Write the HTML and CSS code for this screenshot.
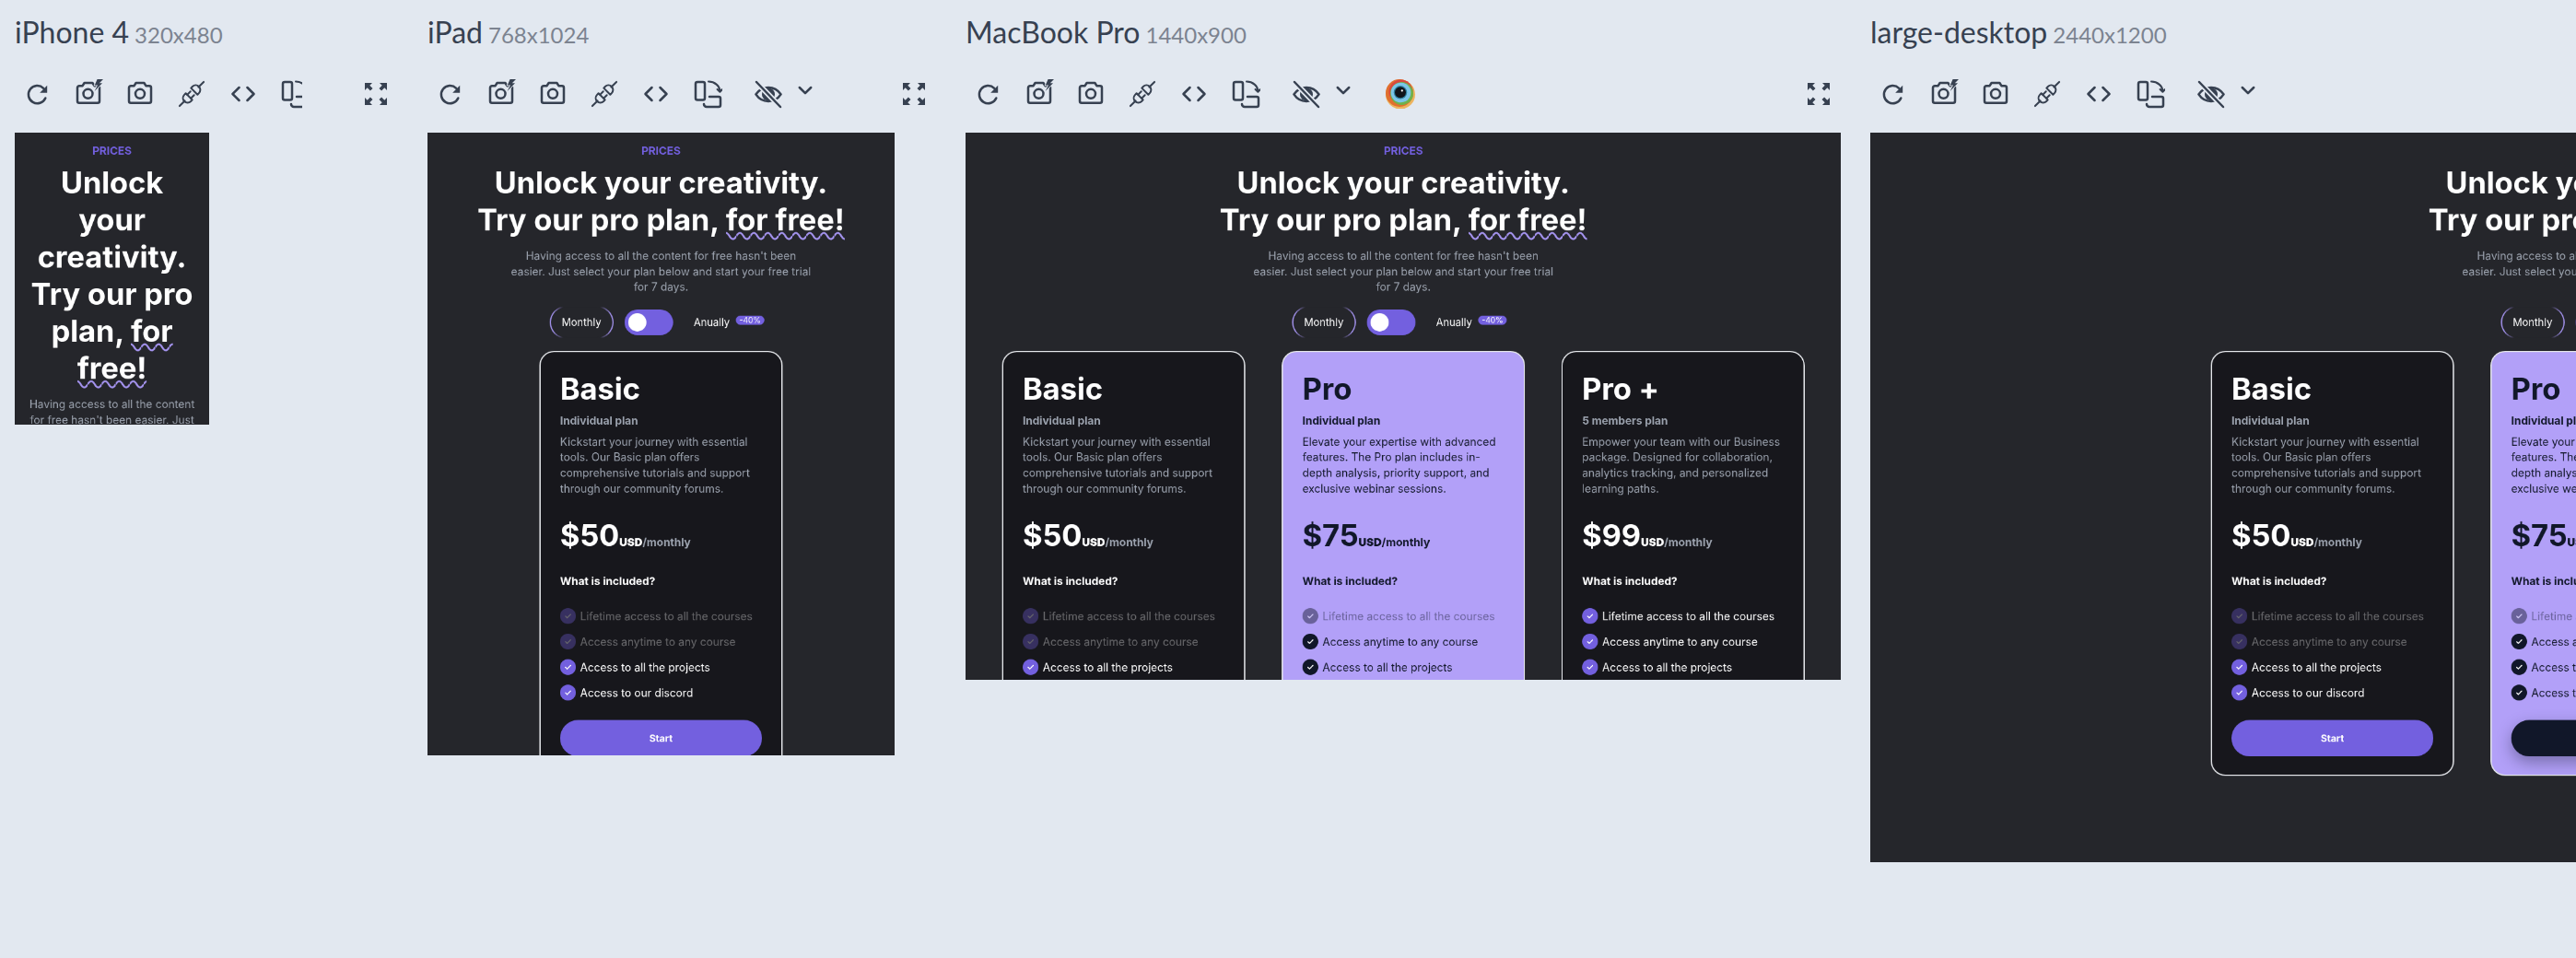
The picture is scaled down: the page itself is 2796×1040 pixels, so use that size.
FILE: index.html
```html
<!DOCTYPE html>
<html lang="en">
<head>
  <meta charset="UTF-8" />
  <meta name="viewport" content="width=device-width, initial-scale=1.0" />
  <title>Device preview</title>
  <link rel="stylesheet" href="styles.css">
</head>
<body>
  <!-- Icon sprite -->
  <svg class="sprite" xmlns="http://www.w3.org/2000/svg">
    <symbol id="i-reload" viewBox="0 0 32 32">
      <path class="ln" d="M25.3 20.5A9.6 9.6 0 1 1 23.2 9.8"/>
      <path class="fl" d="M27.2 6.8V14.8H19.2Z"/>
    </symbol>
    <symbol id="i-flash" viewBox="0 0 32 32">
      <path class="ln" d="M6 7.2H9.6L11.6 4H20.4L22.4 7.2H26A2 2 0 0 1 28 9.2V23.8A2 2 0 0 1 26 25.8H6A2 2 0 0 1 4 23.8V9.2A2 2 0 0 1 6 7.2Z"/>
      <circle class="ln" cx="15.5" cy="15.8" r="5"/>
      <path class="bolt" d="M33-1H26L22.8 6.4H26L22.6 13 31 4.2H27.8Z"/>
    </symbol>
    <symbol id="i-camera" viewBox="0 0 32 32">
      <path class="ln" d="M6 7.2H9.6L11.6 4H20.4L22.4 7.2H26A2 2 0 0 1 28 9.2V23.8A2 2 0 0 1 26 25.8H6A2 2 0 0 1 4 23.8V9.2A2 2 0 0 1 6 7.2Z"/>
      <circle class="ln" cx="16" cy="15.8" r="5"/>
    </symbol>
    <symbol id="i-plug" viewBox="0 0 32 32">
      <g transform="rotate(-45 16 16)">
        <path class="ln thin" d="M-2.5 16H5.5M26.5 16H34.5M12 13.2H17M12 18.8H17"/>
        <path class="ln thin" d="M12 11H9.8A5 5 0 0 0 9.8 21H12Z"/>
        <path class="ln thin" d="M20 11H22.2A5 5 0 0 1 22.2 21H20Z"/>
      </g>
    </symbol>
    <symbol id="i-code" viewBox="0 0 32 32">
      <path class="ln" d="M11.5 9L4.5 16L11.5 23M20.5 9L27.5 16L20.5 23"/>
    </symbol>
    <symbol id="i-rotate" viewBox="0 0 32 32">
      <rect class="ln" x="3" y="3" width="10" height="19.5" rx="2"/>
      <path class="ln thin" d="M17 2.6C23.5 2.6 29.4 7 29.4 13.6M26.6 11L29.4 13.8L32 11"/>
      <path class="ln" d="M18 19H28A2 2 0 0 1 30 21V28A2 2 0 0 1 28 30H15A3 3 0 0 1 12 27"/>
    </symbol>
    <symbol id="i-eye" viewBox="0 0 32 32">
      <path class="ln" d="M2.4 16.4C9 6.4 23 6.4 29.6 16.4C23 26.4 9 26.4 2.4 16.4Z"/>
      <circle class="fl" cx="16" cy="16.4" r="7"/>
      <path class="cut" d="M3 3L29 30"/>
      <path class="ln" d="M3 3L29 30"/>
    </symbol>
    <symbol id="i-chevron" viewBox="0 0 32 32">
      <path class="ln" d="M9.8 9L16 15.2L22.2 9"/>
    </symbol>
    <symbol id="i-expand" viewBox="0 0 32 32">
      <path class="fl" d="M4 4H12L9.3 6.7L12.5 9.9L9.9 12.5L6.7 9.3L4 12Z"/>
      <path class="fl" d="M28 4H20L22.7 6.7L19.5 9.9L22.1 12.5L25.3 9.3L28 12Z"/>
      <path class="fl" d="M4 28H12L9.3 25.3L12.5 22.1L9.9 19.5L6.7 22.7L4 20Z"/>
      <path class="fl" d="M28 28H20L22.7 25.3L19.5 22.1L22.1 19.5L25.3 22.7L28 20Z"/>
    </symbol>
    <symbol id="i-check" viewBox="0 0 26 26">
      <path class="tick" d="M9 13.4L11.8 16L17.2 10.4"/>
    </symbol>
  </svg>

  <div class="devices">

    <!-- iPhone 4 -->
    <section class="device device-phone">
      <h2 class="device-title">iPhone 4 <small>320x480</small></h2>
      <div class="toolbar">
        <div class="tools">
          <button class="tool"><svg><use href="#i-reload"/></svg></button>
          <button class="tool"><svg><use href="#i-flash"/></svg></button>
          <button class="tool"><svg><use href="#i-camera"/></svg></button>
          <button class="tool"><svg><use href="#i-plug"/></svg></button>
          <button class="tool"><svg><use href="#i-code"/></svg></button>
          <button class="tool"><svg><use href="#i-rotate"/></svg></button>
        </div>
        <button class="tool tool-end"><svg><use href="#i-expand"/></svg></button>
      </div>
      <div class="viewport">
        <div class="page">
          <p class="eyebrow">PRICES</p>
          <h1 class="headline">Unlock your creativity. <br>Try our pro plan, <span class="wavy">for free!</span></h1>
          <p class="lead">Having access to all the content for free hasn't been easier. Just select your plan below and start your free trial for 7 days.</p>
        </div>
      </div>
    </section>

    <!-- iPad -->
    <section class="device device-tablet">
      <h2 class="device-title">iPad <small>768x1024</small></h2>
      <div class="toolbar">
        <div class="tools">
          <button class="tool"><svg><use href="#i-reload"/></svg></button>
          <button class="tool"><svg><use href="#i-flash"/></svg></button>
          <button class="tool"><svg><use href="#i-camera"/></svg></button>
          <button class="tool"><svg><use href="#i-plug"/></svg></button>
          <button class="tool"><svg><use href="#i-code"/></svg></button>
          <button class="tool"><svg><use href="#i-rotate"/></svg></button>
          <button class="tool tool-eye"><svg><use href="#i-eye"/></svg></button>
          <button class="tool tool-chevron"><svg><use href="#i-chevron"/></svg></button>
        </div>
        <button class="tool tool-end"><svg><use href="#i-expand"/></svg></button>
      </div>
      <div class="viewport">
        <div class="page">
          <p class="eyebrow">PRICES</p>
          <h1 class="headline">Unlock your creativity. <br>Try our pro plan, <span class="wavy">for free!</span></h1>
          <p class="lead">Having access to all the content for free hasn't been easier. Just select your plan below and start your free trial for 7 days.</p>
          <div class="period">
            <span class="period-option period-active">Monthly</span>
            <span class="switch"><span class="switch-knob"></span></span>
            <span class="period-option period-save">Anually <span class="save">-40%</span></span>
          </div>
          <div class="plans">
            <article class="plan">
              <h3 class="plan-name">Basic</h3>
              <p class="plan-kind">Individual plan</p>
              <p class="plan-desc">Kickstart your journey with essential tools. Our Basic plan offers comprehensive tutorials and support through our community forums.</p>
              <p class="plan-price">$50<span class="plan-unit"><b>USD</b>/monthly</span></p>
              <p class="plan-included">What is included?</p>
              <ul class="perks">
                <li class="perk perk-off"><svg class="perk-check"><use href="#i-check"/></svg>Lifetime access to all the courses</li>
                <li class="perk perk-off"><svg class="perk-check"><use href="#i-check"/></svg>Access anytime to any course</li>
                <li class="perk"><svg class="perk-check"><use href="#i-check"/></svg>Access to all the projects</li>
                <li class="perk"><svg class="perk-check"><use href="#i-check"/></svg>Access to our discord</li>
              </ul>
              <button class="plan-btn">Start</button>
            </article>
          </div>
        </div>
      </div>
    </section>

    <!-- MacBook Pro -->
    <section class="device device-laptop">
      <h2 class="device-title">MacBook Pro <small>1440x900</small></h2>
      <div class="toolbar">
        <div class="tools">
          <button class="tool"><svg><use href="#i-reload"/></svg></button>
          <button class="tool"><svg><use href="#i-flash"/></svg></button>
          <button class="tool"><svg><use href="#i-camera"/></svg></button>
          <button class="tool"><svg><use href="#i-plug"/></svg></button>
          <button class="tool"><svg><use href="#i-code"/></svg></button>
          <button class="tool"><svg><use href="#i-rotate"/></svg></button>
          <button class="tool tool-eye"><svg><use href="#i-eye"/></svg></button>
          <button class="tool tool-chevron"><svg><use href="#i-chevron"/></svg></button>
          <button class="tool tool-ext">
            <svg viewBox="0 0 32 32">
              <circle cx="16" cy="16.5" r="16" fill="#ecb45f"/>
              <circle cx="15" cy="15" r="15" fill="#e0702f"/>
              <circle cx="16.5" cy="13.5" r="13" fill="#d8483f"/>
              <circle cx="17.5" cy="15.5" r="12.5" fill="#6fb24c"/>
              <circle cx="16.5" cy="14.5" r="10.8" fill="#7cc5e8"/>
              <circle cx="16" cy="14.3" r="7.2" fill="#2f7f9c"/>
              <circle cx="16" cy="14.3" r="6" fill="#10141a"/>
              <circle cx="17.8" cy="12.4" r="1.1" fill="#fff"/>
            </svg>
          </button>
        </div>
        <button class="tool tool-end"><svg><use href="#i-expand"/></svg></button>
      </div>
      <div class="viewport">
        <div class="page">
          <p class="eyebrow">PRICES</p>
          <h1 class="headline">Unlock your creativity. <br>Try our pro plan, <span class="wavy">for free!</span></h1>
          <p class="lead">Having access to all the content for free hasn't been easier. Just select your plan below and start your free trial for 7 days.</p>
          <div class="period">
            <span class="period-option period-active">Monthly</span>
            <span class="switch"><span class="switch-knob"></span></span>
            <span class="period-option period-save">Anually <span class="save">-40%</span></span>
          </div>
          <div class="plans">
            <article class="plan">
              <h3 class="plan-name">Basic</h3>
              <p class="plan-kind">Individual plan</p>
              <p class="plan-desc">Kickstart your journey with essential tools. Our Basic plan offers comprehensive tutorials and support through our community forums.</p>
              <p class="plan-price">$50<span class="plan-unit"><b>USD</b>/monthly</span></p>
              <p class="plan-included">What is included?</p>
              <ul class="perks">
                <li class="perk perk-off"><svg class="perk-check"><use href="#i-check"/></svg>Lifetime access to all the courses</li>
                <li class="perk perk-off"><svg class="perk-check"><use href="#i-check"/></svg>Access anytime to any course</li>
                <li class="perk"><svg class="perk-check"><use href="#i-check"/></svg>Access to all the projects</li>
                <li class="perk"><svg class="perk-check"><use href="#i-check"/></svg>Access to our discord</li>
              </ul>
              <button class="plan-btn">Start</button>
            </article>
            <article class="plan plan-featured">
              <h3 class="plan-name">Pro</h3>
              <p class="plan-kind">Individual plan</p>
              <p class="plan-desc">Elevate your expertise with advanced features. The Pro plan includes in-depth analysis, priority support, and exclusive webinar sessions.</p>
              <p class="plan-price">$75<span class="plan-unit"><b>USD</b>/monthly</span></p>
              <p class="plan-included">What is included?</p>
              <ul class="perks">
                <li class="perk perk-off"><svg class="perk-check"><use href="#i-check"/></svg>Lifetime access to all the courses</li>
                <li class="perk"><svg class="perk-check"><use href="#i-check"/></svg>Access anytime to any course</li>
                <li class="perk"><svg class="perk-check"><use href="#i-check"/></svg>Access to all the projects</li>
                <li class="perk"><svg class="perk-check"><use href="#i-check"/></svg>Access to our discord</li>
              </ul>
              <button class="plan-btn">Start</button>
            </article>
            <article class="plan">
              <h3 class="plan-name">Pro +</h3>
              <p class="plan-kind">5 members plan</p>
              <p class="plan-desc">Empower your team with our Business package. Designed for collaboration, analytics tracking, and personalized learning paths.</p>
              <p class="plan-price">$99<span class="plan-unit"><b>USD</b>/monthly</span></p>
              <p class="plan-included">What is included?</p>
              <ul class="perks">
                <li class="perk"><svg class="perk-check"><use href="#i-check"/></svg>Lifetime access to all the courses</li>
                <li class="perk"><svg class="perk-check"><use href="#i-check"/></svg>Access anytime to any course</li>
                <li class="perk"><svg class="perk-check"><use href="#i-check"/></svg>Access to all the projects</li>
                <li class="perk"><svg class="perk-check"><use href="#i-check"/></svg>Access to our discord</li>
              </ul>
              <button class="plan-btn">Start</button>
            </article>
          </div>
        </div>
      </div>
    </section>

    <!-- large-desktop -->
    <section class="device device-desktop">
      <h2 class="device-title">large-desktop <small>2440x1200</small></h2>
      <div class="toolbar">
        <div class="tools">
          <button class="tool"><svg><use href="#i-reload"/></svg></button>
          <button class="tool"><svg><use href="#i-flash"/></svg></button>
          <button class="tool"><svg><use href="#i-camera"/></svg></button>
          <button class="tool"><svg><use href="#i-plug"/></svg></button>
          <button class="tool"><svg><use href="#i-code"/></svg></button>
          <button class="tool"><svg><use href="#i-rotate"/></svg></button>
          <button class="tool tool-eye"><svg><use href="#i-eye"/></svg></button>
          <button class="tool tool-chevron"><svg><use href="#i-chevron"/></svg></button>
        </div>
      </div>
      <div class="viewport">
        <div class="page">
          <p class="eyebrow">PRICES</p>
          <h1 class="headline">Unlock your creativity. <br>Try our pro plan, <span class="wavy">for free!</span></h1>
          <p class="lead">Having access to all the content for free hasn't been easier. Just select your plan below and start your free trial for 7 days.</p>
          <div class="period">
            <span class="period-option period-active">Monthly</span>
            <span class="switch"><span class="switch-knob"></span></span>
            <span class="period-option period-save">Anually <span class="save">-40%</span></span>
          </div>
          <div class="plans">
            <article class="plan">
              <h3 class="plan-name">Basic</h3>
              <p class="plan-kind">Individual plan</p>
              <p class="plan-desc">Kickstart your journey with essential tools. Our Basic plan offers comprehensive tutorials and support through our community forums.</p>
              <p class="plan-price">$50<span class="plan-unit"><b>USD</b>/monthly</span></p>
              <p class="plan-included">What is included?</p>
              <ul class="perks">
                <li class="perk perk-off"><svg class="perk-check"><use href="#i-check"/></svg>Lifetime access to all the courses</li>
                <li class="perk perk-off"><svg class="perk-check"><use href="#i-check"/></svg>Access anytime to any course</li>
                <li class="perk"><svg class="perk-check"><use href="#i-check"/></svg>Access to all the projects</li>
                <li class="perk"><svg class="perk-check"><use href="#i-check"/></svg>Access to our discord</li>
              </ul>
              <button class="plan-btn">Start</button>
            </article>
            <article class="plan plan-featured">
              <h3 class="plan-name">Pro</h3>
              <p class="plan-kind">Individual plan</p>
              <p class="plan-desc">Elevate your expertise with advanced features. The Pro plan includes in-depth analysis, priority support, and exclusive webinar sessions.</p>
              <p class="plan-price">$75<span class="plan-unit"><b>USD</b>/monthly</span></p>
              <p class="plan-included">What is included?</p>
              <ul class="perks">
                <li class="perk perk-off"><svg class="perk-check"><use href="#i-check"/></svg>Lifetime access to all the courses</li>
                <li class="perk"><svg class="perk-check"><use href="#i-check"/></svg>Access anytime to any course</li>
                <li class="perk"><svg class="perk-check"><use href="#i-check"/></svg>Access to all the projects</li>
                <li class="perk"><svg class="perk-check"><use href="#i-check"/></svg>Access to our discord</li>
              </ul>
              <button class="plan-btn">Start</button>
            </article>
            <article class="plan">
              <h3 class="plan-name">Pro +</h3>
              <p class="plan-kind">5 members plan</p>
              <p class="plan-desc">Empower your team with our Business package. Designed for collaboration, analytics tracking, and personalized learning paths.</p>
              <p class="plan-price">$99<span class="plan-unit"><b>USD</b>/monthly</span></p>
              <p class="plan-included">What is included?</p>
              <ul class="perks">
                <li class="perk"><svg class="perk-check"><use href="#i-check"/></svg>Lifetime access to all the courses</li>
                <li class="perk"><svg class="perk-check"><use href="#i-check"/></svg>Access anytime to any course</li>
                <li class="perk"><svg class="perk-check"><use href="#i-check"/></svg>Access to all the projects</li>
                <li class="perk"><svg class="perk-check"><use href="#i-check"/></svg>Access to our discord</li>
              </ul>
              <button class="plan-btn">Start</button>
            </article>
          </div>
        </div>
      </div>
    </section>

  </div>
</body>
</html>
```

FILE: styles.css
```css
html, body {
  margin: 0;
  height: 100%;
  overflow: hidden;
  background: #e2e8f0;
}

body {
  font-family: 'Inter', sans-serif;
}

.sprite {
  display: none;
}

/* Icon parts */
.ln {
  fill: none;
  stroke: #374151;
  stroke-width: 2.5;
  stroke-linecap: round;
  stroke-linejoin: round;
}

.ln.thin {
  stroke-width: 2;
}

.fl {
  fill: #374151;
}

.bolt {
  fill: #374151;
  stroke: #e2e8f0;
  stroke-width: 1.6;
  paint-order: stroke;
}

.cut {
  fill: none;
  stroke: #e2e8f0;
  stroke-width: 6;
}

.tick {
  fill: none;
  stroke: #fff;
  stroke-width: 1.8;
  stroke-linecap: round;
  stroke-linejoin: round;
}

/* Device columns */
.devices {
  display: flex;
  gap: 32px;
  padding: 0 0 0 16px;
  width: max-content;
}

.device {
  flex: none;
}

.device-phone { width: 416px; }
.device-tablet { width: 552px; }
.device-laptop { width: 950px; }
.device-desktop { width: 1610px; }

.device-title {
  display: flex;
  align-items: baseline;
  gap: 6px;
  height: 40px;
  margin: 15px 0 0;
  font-family: 'Lato', sans-serif;
  font-size: 32px;
  font-weight: 400;
  line-height: 40px;
  color: #374151;
  white-space: nowrap;
}

.device-title small {
  font-size: 24px;
  color: #6b7280;
  opacity: .85;
}

.toolbar {
  display: flex;
  justify-content: space-between;
  align-items: center;
  height: 32px;
  margin: 31px 0 0 -4px;
}

.tools {
  display: flex;
  align-items: center;
  min-width: 0;
  overflow: hidden;
}

.device-phone .tools {
  width: 316px;
  flex: none;
}

.tool {
  flex: none;
  width: 56px;
  height: 32px;
  padding: 0 12px;
  border: 0;
  background: none;
}

.tool svg {
  display: block;
  width: 32px;
  height: 32px;
  overflow: visible;
}

.tool-eye {
  margin-left: 10px;
}

.tool-chevron {
  width: 24px;
  padding: 0 4px;
}

.tool-chevron svg {
  margin-left: -8px;
}

.tool-ext {
  margin-left: 22px;
}

.tool-end {
  margin-right: -4px;
}

/* Scaled site preview */
.viewport {
  margin-top: 26px;
  overflow: hidden;
  background: #25262b;
}

.device-phone .viewport { width: 211px; height: 317px; }
.device-tablet .viewport { width: 507px; height: 676px; }
.device-laptop .viewport { width: 950px; height: 594px; }
.device-desktop .viewport { width: 1610px; height: 792px; }

.page {
  box-sizing: border-box;
  padding: 20px 16px 0;
  text-align: center;
  color: #fff;
  transform: scale(.66);
  transform-origin: 0 0;
  will-change: transform;
}

.device-phone .page { width: 320px; }
.device-tablet .page { width: 768px; }
.device-laptop .page { width: 1440px; }
.device-desktop .page { width: 2440px; }

.eyebrow {
  margin: 0;
  font-size: 18px;
  font-weight: 700;
  line-height: 20px;
  color: #7360df;
}

.headline {
  margin: 12px 0 0;
  font-size: 49.5px;
  font-weight: 700;
  line-height: 61px;
}

.wavy {
  padding-bottom: 4px;
  background: url("data:image/svg+xml,%3Csvg xmlns='http://www.w3.org/2000/svg' width='23' height='14'%3E%3Cpath d='M0 7q5.75-10 11.5 0t11.5 0' fill='none' stroke='%23a594f0' stroke-width='3.2'/%3E%3C/svg%3E") -6px 100% / 23px 14px repeat-x;
}

.lead {
  max-width: 500px;
  margin: 16px auto 0;
  font-size: 18px;
  line-height: 25.6px;
  color: #9ca3af;
}

/* Monthly / annually switch */
.period {
  display: flex;
  justify-content: center;
  align-items: center;
  margin-top: 18px;
  font-size: 17px;
}

.period-option {
  display: flex;
  align-items: center;
  gap: 10px;
  height: 54px;
  box-sizing: border-box;
  padding: 0 18px;
  border: 2px solid transparent;
  border-radius: 999px;
}

.period-save {
  padding-right: 11px;
}

.period-active {
  background:
    linear-gradient(#25262b, #25262b) padding-box,
    conic-gradient(transparent 0 14%, #a594f0 20% 30%, transparent 36% 64%, #a594f0 70% 80%, transparent 86%) border-box;
}

.switch {
  display: block;
  box-sizing: border-box;
  width: 80px;
  height: 42px;
  margin: 0 14px 0 18px;
  padding: 6px;
  border-radius: 21px;
  background: #7360df;
}

.switch-knob {
  display: block;
  width: 30px;
  height: 30px;
  border-radius: 50%;
  background: #fff;
}

.save {
  padding: 0 6px;
  margin-top: -6px;
  border-radius: 8px;
  background: #7360df;
  font-size: 13px;
  line-height: 15px;
}

/* Plans */
.plans {
  display: flex;
  justify-content: center;
  gap: 60px;
  margin-top: 20px;
}

.plan {
  box-sizing: border-box;
  flex: none;
  width: 400px;
  padding: 32px 32px 30px;
  border: 2px solid #e5e7eb;
  border-radius: 24px;
  background: #17171c;
  text-align: left;
}

.plan-name {
  margin: 0;
  font-size: 49.5px;
  font-weight: 700;
  line-height: 56px;
}

.plan-kind {
  margin: 11px 0 0;
  font-size: 18px;
  font-weight: 700;
  line-height: 28px;
  color: #9ca3af;
}

.plan-desc {
  margin: 8px 0 0;
  font-size: 18px;
  line-height: 25.6px;
  color: #9ca3af;
}

.plan-price {
  margin: 36px 0 0;
  font-size: 49.5px;
  font-weight: 700;
  line-height: 56px;
}

.plan-unit {
  font-size: 18px;
  line-height: 1;
  color: #9ca3af;
}

.plan-unit b {
  color: #fff;
}

.plan-included {
  margin: 36px 0 0;
  font-size: 18px;
  font-weight: 700;
  line-height: 24px;
}

.perks {
  margin: 24px 0 0;
  padding: 0;
  list-style: none;
}

.perk {
  display: flex;
  align-items: center;
  gap: 7px;
  height: 42px;
  font-size: 18px;
  white-space: nowrap;
}

.perk-check {
  flex: none;
  width: 26px;
  height: 26px;
  border-radius: 50%;
  background: #7360df;
}

.perk-off {
  opacity: .35;
}

.plan-btn {
  display: block;
  width: 100%;
  height: 60px;
  margin-top: 24px;
  border: 0;
  border-radius: 30px;
  background: #7360df;
  color: #fff;
  font-family: inherit;
  font-size: 16px;
  font-weight: 700;
}

.plan-featured {
  background: #b2a0f8;
  color: #111729;
}

.plan-featured .plan-kind,
.plan-featured .plan-desc,
.plan-featured .plan-unit,
.plan-featured .plan-unit b {
  color: #111729;
}

.plan-featured .perk-check {
  background: #111729;
}

.plan-featured .perk-off {
  opacity: .45;
}

.plan-featured .plan-btn {
  background: #111729;
  box-shadow: 0 10px 24px rgba(17, 23, 41, .35);
}
```
